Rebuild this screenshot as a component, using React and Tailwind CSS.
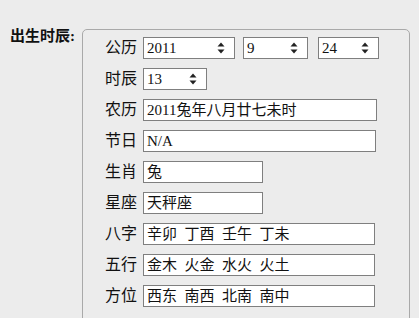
import React from "react";

const font = { fontFamily: '"Liberation Serif", "Noto Sans CJK SC", serif' };

function Spin() {
  return (
    <svg width="8" height="12" viewBox="0 0 8 12" className="shrink-0">
      <path d="M4 0.5 L7.5 4.5 L0.5 4.5 Z" fill="#222" />
      <path d="M4 11.5 L7.5 7.5 L0.5 7.5 Z" fill="#222" />
    </svg>
  );
}

function Box({ value, width, spin }) {
  return (
    <div
      className="h-[22px] border border-[#7f7f7f] bg-white flex items-center pl-[3px] pr-[9px] text-[15px] text-[#111] leading-none"
      style={{ width }}
    >
      <span className="flex-1 whitespace-pre">{value}</span>
      {spin && <Spin />}
    </div>
  );
}

function Row({ label, children }) {
  return (
    <div className="flex items-center h-[22px]">
      <div className="w-[38px] text-[16px] text-[#111] leading-none">{label}</div>
      {children}
    </div>
  );
}

export default function App() {
  return (
    <div className="w-[419px] h-[318px] bg-[#ececec] overflow-hidden flex pt-[29px]" style={font}>
      <div className="w-[82px] pl-[10px] text-[15px] font-bold text-[#111] leading-none">
        出生时辰:
      </div>
      <div className="w-[328px] h-[320px] border border-[#a9a9a9] rounded-[5px] pt-[7px] pl-[22px] flex flex-col gap-[9px]">
        <Row label="公历">
          <Box value="2011" width={92} spin />
          <div className="w-[8px]" />
          <Box value="9" width={65} spin />
          <div className="w-[10px]" />
          <Box value="24" width={61} spin />
        </Row>
        <Row label="时辰">
          <Box value="13" width={64} spin />
        </Row>
        <Row label="农历">
          <Box value="2011兔年八月廿七未时" width={234} />
        </Row>
        <Row label="节日">
          <Box value="N/A" width={233} />
        </Row>
        <Row label="生肖">
          <Box value="兔" width={120} />
        </Row>
        <Row label="星座">
          <Box value="天秤座" width={120} />
        </Row>
        <Row label="八字">
          <Box value="辛卯  丁酉  壬午  丁未" width={232} />
        </Row>
        <Row label="五行">
          <Box value="金木  火金  水火  火土" width={232} />
        </Row>
        <Row label="方位">
          <Box value="西东  南西  北南  南中" width={232} />
        </Row>
      </div>
    </div>
  );
}
